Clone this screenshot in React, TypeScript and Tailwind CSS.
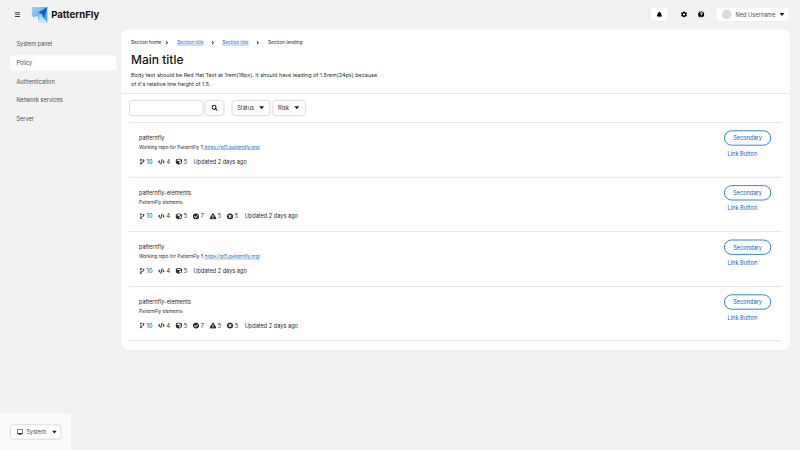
import React from "react";
import { FaBell, FaCog, FaQuestionCircle, FaSearch, FaDesktop, FaCodeBranch, FaCode, FaCube, FaCheckCircle, FaExclamationTriangle, FaTimesCircle, FaBars } from "react-icons/fa";

const Caret = () => (
  <svg width="14" height="9" viewBox="0 0 14 9" className="shrink-0"><path d="M1 0.5h12L7 8z" fill="#151515" /></svg>
);
const Chevron = () => (
  <svg width="7" height="12" viewBox="0 0 10 15" className="shrink-0"><path d="M2 1L9 7.5 2 14 0.5 12 5 7.5 0.5 3z" fill="#151515" /></svg>
);

const Logo = () => (
  <svg width="40" height="40" viewBox="0 0 16 16">
    <defs>
      <linearGradient id="g1" x1="0" y1="0" x2="1" y2="1">
        <stop offset="0" stopColor="#a8d1f5" />
        <stop offset="1" stopColor="#3d9be9" />
      </linearGradient>
      <linearGradient id="g2" x1="0" y1="0" x2="0" y2="1">
        <stop offset="0" stopColor="#8cc4f2" />
        <stop offset="1" stopColor="#d8ebfb" />
      </linearGradient>
    </defs>
    <path d="M0 0.5H16V16H7.5L6 9.5 1.5 11 0 7z" fill="url(#g1)" />
    <path d="M7 16L8 7 16 16z" fill="url(#g2)" />
    <path d="M6.5 6L16 0.5 12.5 12 10.5 7.5z" fill="#0066cc" />
  </svg>
);

const Stat = ({ icon, n }: { icon: React.ReactNode; n: number }) => (
  <span className="flex items-center gap-[4px]">
    {icon}
    <span>{n}</span>
  </span>
);

const Row = ({ title, desc, link, extra }: { title: string; desc: string; link?: boolean; extra?: boolean }) => (
  <div className="flex justify-between h-[136.5px] border-b-2 border-[#e0e0e0] pl-[25px] pr-[27px] pt-[26px]">
    <div className="flex flex-col">
      <div className="text-[14px] leading-[24px] text-[#2a2a2a]">{title}</div>
      <div className="text-[11.6px] leading-[18px] mt-[3px] text-[#2a2a2a]">
        {desc}
        {link && <span className="text-[#0066cc] underline"> https://pf5.patternfly.org/</span>}
      </div>
      <div className="flex items-center gap-[14px] mt-[14px] text-[14px] leading-[24px] text-[#2a2a2a]">
        <Stat icon={<FaCodeBranch size={15} />} n={10} />
        <Stat icon={<FaCode size={17} />} n={4} />
        <Stat icon={<FaCube size={16} />} n={5} />
        {extra && (
          <>
            <Stat icon={<FaCheckCircle size={16} />} n={7} />
            <Stat icon={<FaExclamationTriangle size={17} />} n={5} />
            <Stat icon={<FaTimesCircle size={16} />} n={5} />
          </>
        )}
        <span className="ml-[2px]">Updated 2 days ago</span>
      </div>
    </div>
    <div className="flex flex-col items-center w-[118px] -mt-[7px]">
      <button className="w-[118px] h-[38px] rounded-full border-2 border-[#0066cc] text-[#0066cc] text-[14px] bg-white whitespace-nowrap">Secondary</button>
      <span className="text-[#0066cc] text-[14px] leading-[24px] mt-[8px] mr-[26px] whitespace-nowrap">Link Button</span>
    </div>
  </div>
);

const Filter = ({ label, w }: { label: string; w: string }) => (
  <button className={`${w} h-[40px] rounded-[8px] border-2 border-[#d2d2d2] bg-white flex items-center justify-center gap-[12px] text-[14px] text-[#2a2a2a]`}>
    {label}
    <Caret />
  </button>
);

const Nav = ({ label, active }: { label: string; active?: boolean }) => (
  <div className={`h-[38px] rounded-[8px] flex items-center pl-[16px] text-[14px] text-[#4d4d4d] ${active ? "bg-white" : ""}`}>{label}</div>
);

export default function App() {
  return (
    <div className="w-[800px] h-[450px] overflow-hidden">
      <div className="w-[2000px] h-[1125px] origin-top-left scale-[0.4] bg-[#f2f2f2] flex flex-col font-['Inter','Noto_Sans',sans-serif]">
        <header className="h-[72.5px] flex items-center justify-between pl-[36px] pr-[25px] shrink-0">
          <div className="flex items-center">
            <FaBars size={15} className="text-[#444444]" />
            <div className="ml-[28px]"><Logo /></div>
            <span className="ml-[9px] text-[24px] font-bold text-[#151515]">PatternFly</span>
          </div>
          <div className="flex items-center">
            <button className="w-[48px] h-[38px] rounded-[8px] bg-white border-2 border-[#e8e8e8] flex items-center justify-center">
              <FaBell size={15} />
            </button>
            <FaCog size={16} className="ml-[30px]" />
            <FaQuestionCircle size={16} className="ml-[27px]" />
            <button className="ml-[27px] w-[187px] h-[38px] rounded-[8px] bg-white border-2 border-[#e8e8e8] flex items-center pl-[15px] text-[14px] text-[#4d4d4d] whitespace-nowrap">
              <span className="w-[24px] h-[24px] rounded-full bg-[#dcdcdc] shrink-0" />
              <span className="ml-[10px]">Ned Username</span>
              <span className="ml-[10px]"><Caret /></span>
            </button>
          </div>
        </header>
        <div className="flex-1 flex min-h-0">
          <aside className="w-[302.5px] shrink-0 flex flex-col justify-between">
            <div className="flex flex-col gap-[8.5px] pl-[25px] pr-[12px] pt-[19px]">
              <Nav label="System panel" />
              <Nav label="Policy" active />
              <Nav label="Authentication" />
              <Nav label="Network services" />
              <Nav label="Server" />
            </div>
            <div className="w-[178px] h-[90px] bg-[#fafafa] flex items-center pl-[25px]">
              <button className="w-[128px] h-[38px] rounded-[8px] bg-white border-2 border-[#d2d2d2] flex items-center pl-[15px] text-[14px] text-[#4d4d4d] whitespace-nowrap">
                <FaDesktop size={16} className="text-[#151515]" />
                <span className="ml-[8px]">System</span>
                <span className="ml-[14px]"><Caret /></span>
              </button>
            </div>
          </aside>
          <main className="w-[1672.5px] h-[802px] bg-white rounded-[20px]">
            <div className="h-[162px] border-b-2 border-[#e0e0e0] pl-[25px] pt-[24px]">
              <div className="flex items-center text-[11.8px] leading-[20px] text-[#2a2a2a]">
                <span>Section home</span>
                <span className="ml-[10px] mr-[22px]"><Chevron /></span>
                <span className="text-[#0066cc] underline">Section title</span>
                <span className="ml-[20px] mr-[20px]"><Chevron /></span>
                <span className="text-[#0066cc] underline">Section title</span>
                <span className="ml-[20px] mr-[22px]"><Chevron /></span>
                <span>Section landing</span>
              </div>
              <h1 className="text-[30px] leading-[36px] font-medium text-[#151515] mt-[14px]">Main title</h1>
              <p className="text-[13.6px] leading-[24px] text-[#2a2a2a] mt-[8px] w-[625px]">
                Body text should be Red Hat Text at 1rem(16px). It should have leading of 1.5rem(24px) because of it's relative line height of 1.5.
              </p>
            </div>
            <div className="mx-[20px]">
              <div className="h-[72.5px] flex items-center border-b-2 border-[#e0e0e0]">
                <div className="w-[186px] h-[40px] rounded-[8px] border-2 border-[#d2d2d2] bg-white" />
                <button className="ml-[3px] w-[49px] h-[40px] rounded-[8px] border-2 border-[#d2d2d2] bg-white flex items-center justify-center">
                  <FaSearch size={15} />
                </button>
                <div className="ml-[18px]"><Filter label="Status" w="w-[97px]" /></div>
                <div className="ml-[5px]"><Filter label="Risk" w="w-[83px]" /></div>
              </div>
              <Row title="patternfly" desc="Working repo for PatternFly 5" link />
              <Row title="patternfly-elements" desc="PatternFly elements" extra />
              <Row title="patternfly" desc="Working repo for PatternFly 5" link />
              <Row title="patternfly-elements" desc="PatternFly elements" extra />
            </div>
          </main>
        </div>
      </div>
    </div>
  );
}
